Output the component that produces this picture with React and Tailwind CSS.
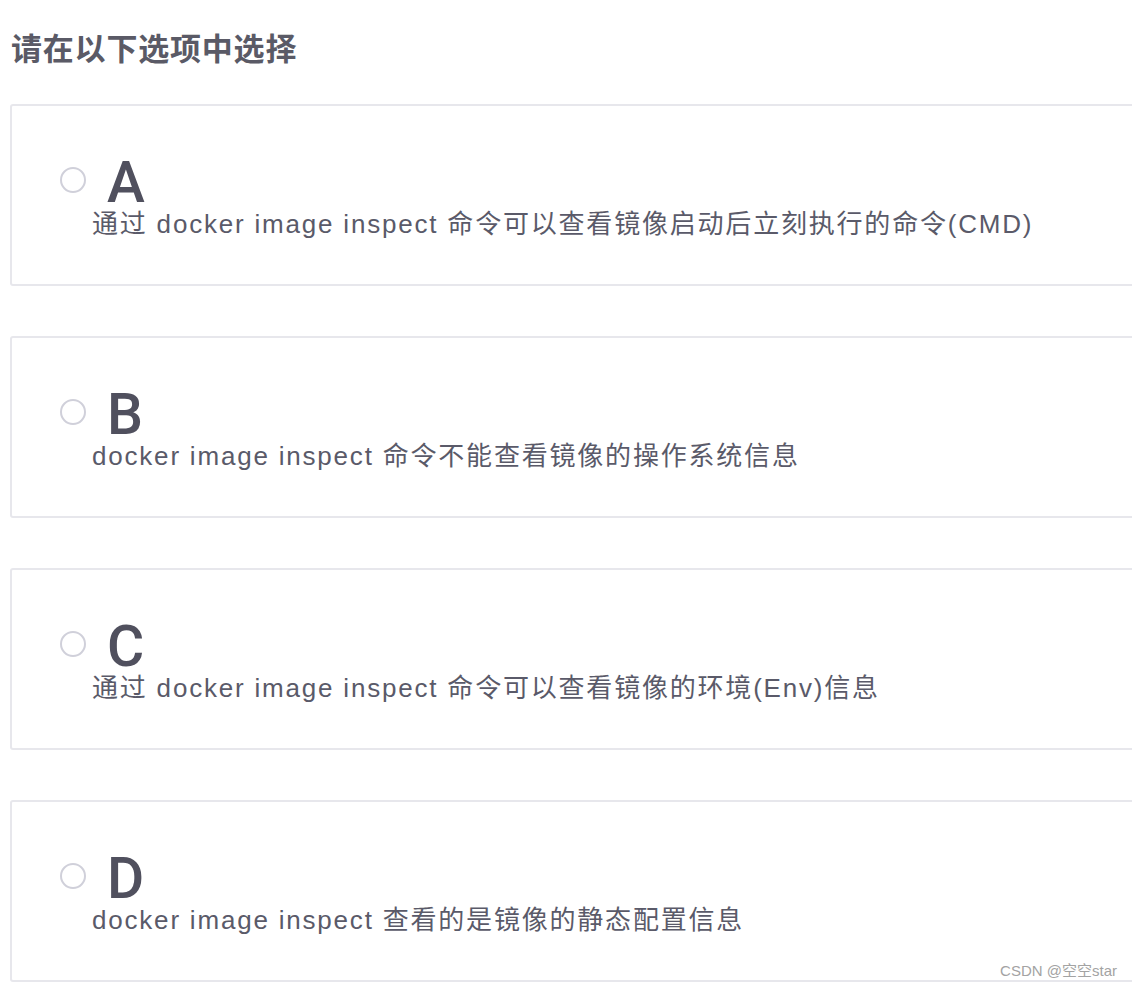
import React from "react";

const options = [
  { letter: "A", text: "通过 docker image inspect 命令可以查看镜像启动后立刻执行的命令(CMD)" },
  { letter: "B", text: "docker image inspect 命令不能查看镜像的操作系统信息" },
  { letter: "C", text: "通过 docker image inspect 命令可以查看镜像的环境(Env)信息" },
  { letter: "D", text: "docker image inspect 查看的是镜像的静态配置信息" },
];

const font = { fontFamily: '"Liberation Sans", "Noto Sans CJK SC", sans-serif' };
const letterFont = { fontFamily: 'Roboto, "Liberation Sans", sans-serif' };

export default function App() {
  return (
    <div className="relative w-[1132px] h-[988px] overflow-hidden bg-white" style={font}>
      <div className="pt-[30px] pl-[11px] text-[31px] leading-[40px] font-bold tracking-[0.8px] text-[#5a5a66]">
        请在以下选项中选择
      </div>
      <div className="mt-[34px] pl-[10px] flex flex-col gap-[50px]">
        {options.map((o) => (
          <div
            key={o.letter}
            className="w-[1160px] h-[182px] border-2 border-[#e7e7ec] rounded-[3px] pt-[53px] pl-[48px]"
          >
            <div className="flex items-start">
              <div className="mt-[8px] w-[26px] h-[26px] rounded-full border-2 border-[#d0d0da] bg-white shrink-0" />
              <div
                className="ml-[21px] text-[57px] leading-[48px] font-medium text-[#50505e]"
                style={letterFont}
              >
                {o.letter}
              </div>
            </div>
            <div className="mt-[4px] ml-[32px] text-[26px] leading-[26px] tracking-[1.8px] text-[#5a5a69]">
              {o.text}
            </div>
          </div>
        ))}
      </div>
      <div className="absolute right-[15px] top-[961px] text-[15px] leading-[20px] text-[#a3a3a3]">
        CSDN @空空star
      </div>
    </div>
  );
}
